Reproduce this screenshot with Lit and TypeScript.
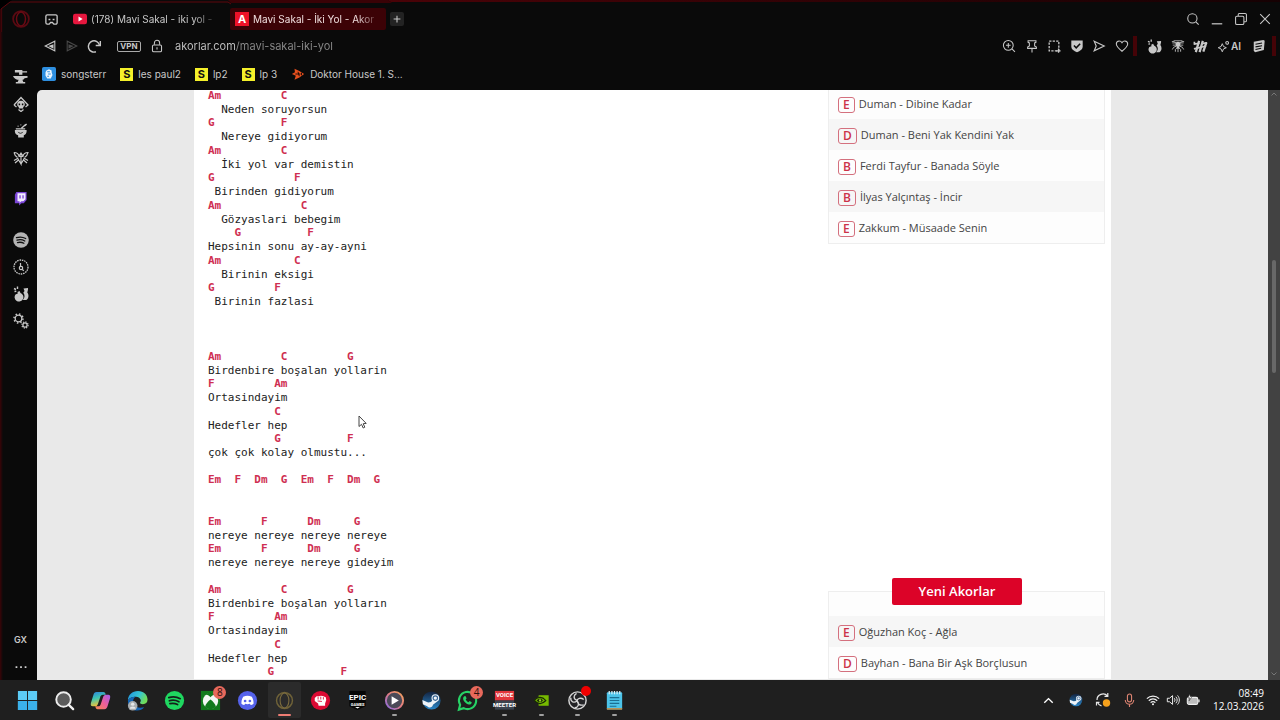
import { LitElement, html, css, svg, TemplateResult } from "lit";
import { customElement } from "lit/decorators.js";
import { classMap } from "lit/directives/class-map.js";

type Art = ReturnType<typeof svg>;

const draw = (size: number, art: Art, box = 16): TemplateResult => html`
  <svg width=${size} height=${size} viewBox="0 0 ${box} ${box}" fill="none" stroke="currentColor" stroke-width="1.2" aria-hidden="true">${art}</svg>
`;

/* ---------- browser chrome ---------- */
const opera = svg`<circle cx="8" cy="8" r="7" stroke="#5a0a12" stroke-width="1.6"/><ellipse cx="8" cy="8" rx="4" ry="6.2" stroke="#6a0a14" stroke-width="1.3"/>`;
const mask = svg`<path d="M3.500 3h9A1.500 1.500 0 0 1 14 4.500v7a1.500 1.500 0 0 1-1.500 1.500H10.500L9 11.200H7L5.500 13h-2A1.500 1.500 0 0 1 2 11.500v-7A1.500 1.500 0 0 1 3.500 3z" stroke-width="1.400"/><path d="M4.800 8h2M9.200 8h2" stroke-width="1.800"/>`;
const youtube = svg`<rect x="0" y="2" width="16" height="12" rx="2.500" fill="#e6173e" stroke="none"/><path d="M6.300 5.200v5.600L11 8z" fill="#fff" stroke="none"/>`;
const plus = svg`<path d="M8 3.500v9M3.500 8h9" stroke-width="1.400"/>`;
const magnifier = svg`<circle cx="7.300" cy="7.300" r="5.300"/><path d="M11.200 11.200l3.300 3.300"/>`;
const minimize = svg`<path d="M2 13.500h12" stroke-width="1.400"/>`;
const restore = svg`<rect x="1.800" y="4.800" width="9.500" height="9.500" rx="1.500"/><path d="M4.800 4.500V3a1.200 1.200 0 0 1 1.200-1.200h6.800A1.400 1.400 0 0 1 14.200 3.200V10a1.200 1.200 0 0 1-1.200 1.200h-1.500"/>`;
const close = svg`<path d="M2.500 2.500l11 11M13.500 2.500l-11 11"/>`;
const back = svg`<path d="M13.500 2.500v11L2.500 8z"/><path d="M12 6v5L6 8z" fill="currentColor" stroke="none"/>`;
const forward = svg`<path d="M2.500 2.500v11L13.500 8z"/><path d="M4 6v5l6-3z" fill="currentColor" stroke="none"/>`;
const reload = svg`<path d="M9.500 13.600A6 6 0 1 1 13.300 6.500" stroke-width="1.500"/><path d="M14.200 2v5H9.300" stroke-width="1.500"/>`;
const lock = svg`<rect x="2.800" y="6.800" width="10.400" height="7.700" rx="1.500"/><path d="M5 6.500V4.500a3 3 0 0 1 6 0v2M8 9.500v2.500"/>`;
const zoomIn = svg`<circle cx="7.200" cy="7.200" r="5.600"/><path d="M11.400 11.400l3.400 3.400M4.500 7.200h5.400M7.200 4.500v5.400"/>`;
const pin = svg`<path d="M3.500 2h9v1.800l-1.500.7v3.500l2 1.200v1.500H3V9.200L5 8V4.500l-1.500-.7zM8 11v4.500"/>`;
const snapshot = svg`<path d="M2.500 2.500h11v11h-11z" stroke-dasharray="2.600 1.400" stroke-width="1.500"/><path d="M10.500 13.500h5M13.200 10.800v5" stroke-width="1.500"/>`;
const shield = svg`<path d="M1.500 1.800h13v6.700c0 3.200-3 5-6.500 6.500C4.500 13.500 1.500 11.700 1.500 8.500z" fill="currentColor" stroke="none"/><path d="M4.500 7.500l2.600 2.600L11.600 5.500" stroke="#0a0a0a" stroke-width="1.700"/>`;
const send = svg`<path d="M2.500 2.500L14 8 2.500 13.500 4.800 8z" stroke-width="1.300"/>`;
const heart = svg`<path d="M8 14C4.500 11.200 1.500 8.800 1.500 5.800 1.500 3.700 3 2.300 4.800 2.300 6.200 2.300 7.300 3 8 4.300 8.700 3 9.800 2.300 11.200 2.300 13 2.300 14.500 3.700 14.500 5.800 14.500 8.800 11.500 11.200 8 14z"/>`;
const potion = svg`<path d="M4.500 6L6.500 5l1 2A4.400 4.400 0 1 1 2.500 8.500L4.800 7.600z" fill="currentColor" stroke="none"/><path d="M10.500 2.500l4.500-.5v1.500l-.7 3c1.800 2 1.600 6-1 7.500h-3.600c2.300-2.200 2.300-5 .6-7.200L11.500 5z" fill="currentColor" stroke="none"/><path d="M1 2.500l2 1M4.500.5v2.500M1.500 5.500l1.800-.3" stroke-width="1.400"/>`;
const spider = svg`<path d="M3 2h10M1.500 4.500h13M2 7h12" stroke-width=".9"/><ellipse cx="8" cy="6" rx="2.700" ry="3" fill="currentColor" stroke="none"/><circle cx="8" cy="9.800" r="1.600" fill="currentColor" stroke="none"/><path d="M6 5L3.500 3H1M10 5l2.500-2H15M6.300 8L3 9.500 1.500 12M9.700 8L13 9.500l1.500 2.500M7 10l-2 2v2.500M9 10l2 2v2.500M8 11v4" stroke-width="1"/>`;
const hashtag = svg`<path d="M6.500 2L3 14M10.500 2L7 14M14.300 3.500L11 13.500" stroke-width="2.400"/><path d="M1 5.500l6-1M1 10.500l13-3M9 5l6-.8M1.500 3v3" stroke-width="1.800"/>`;
const spark = svg`<path d="M6.500 4.500L8 8l3.500 1.500L8 11l-1.500 3.500L5 11 1.500 9.500 5 8z"/><circle cx="12.500" cy="3.500" r="1.700" stroke-width="1.300"/>`;
const scroll = svg`<path d="M2 3l11-2 1.500 1L13.500 12.500 3.500 15 2 13.500z" fill="currentColor" stroke="none"/><path d="M4 6l7.500-1.400M4 9l7.500-1.400M4 12l6.500-1.400" stroke="#0a0a0a" stroke-width="1.200"/>`;
const songsterrArt = svg`<rect width="16" height="16" rx="2" fill="#2e8fe0" stroke="none"/><path d="M5 4l3-1.500L11 4v2l1 3-2 4H6L4 10V6z" fill="#eaf5ff" stroke="none"/><path d="M6 5.500h3M7 8h3M6 10.500h2" stroke="#2e8fe0"/>`;
const doktorArt = svg`<path d="M4 2l5.500 2.500L15 8l-5.500 4L4 14.500 5.500 10 1 8l3.500-2z" fill="#e8501e" stroke="none"/><path d="M5 8h6M8 5.500l1.500 5M12 6.500v3" stroke="#1c0a06" stroke-width="1.100"/>`;
const dots = svg`<path d="M1.800 8h2M7 8h2M12.200 8h2" stroke="#d0d0d0" stroke-width="2"/>`;

/* ---------- side panel ---------- */
const anvil = svg`<path d="M2 1h8v1.500h5v1.200H10V6H6.500V3.700H2zM0 7.500h15.500v1.700c-2.500 0-4 1-4.500 2.300h-1l1 2.300h2v1.700h-10v-1.700h2l1-2.300H4.500C3 11 1 10 0 7.500z" fill="currentColor" stroke="none"/>`;
const skull = svg`<path d="M1 9L8 1.500 15 9l-2.500 2M1 9l2.500 2M5.500 13.500L8 15.500l2.500-2" stroke-width="1.300"/><path d="M4.200 8.500a3.800 3.800 0 1 1 7.600 0c0 1.300-.5 2-1.600 2.500V12.500H5.800v-1.500C4.700 10.500 4.200 9.800 4.200 8.500z" fill="currentColor" stroke="none"/><path d="M6.400 7.500v1.800M9.600 7.500v1.800" stroke="#0a0a0a" stroke-width="1.500"/>`;
const mortar = svg`<path d="M2 7.500h12.500v1.500c0 2-1.500 3.500-3 4v2.500h-6V13C3.500 12.500 2 11 2 9z" fill="currentColor" stroke="none"/><path d="M3 6.300h10M9 5.500l4.500-4M14.500 1l-2 2M5 3.500h.8M8 2h.8" stroke-width="1.500"/><path d="M5.500 9.500c1 2 4 2 5 0" stroke="#0a0a0a" stroke-width=".8"/>`;
const wings = svg`<path d="M1 2.500c3 0 4.500 1.500 5 3.500L8 3l2 3c.5-2 2-3.500 5-3.500-.5 2.500-1.500 4-3.500 5M1 2.500c.5 2.500 1.500 4 3.500 5M8 3v11L4.500 8M8 14l3.500-6M2 13l4-3.500M14 13l-4-3.500M1 10.500l3.500-2M15 10.500l-3.500-2M6 6.500h4" stroke-width="1.200"/>`;
const twitch = svg`<path d="M3.500 1h11v8.500L11.500 13H9l-2.500 2.500V13H2V4z" fill="#7a45d6" stroke="none"/><path d="M4.800 2.300h8.500v6.500L11 11H8.800L7 12.700V11H4.800z" fill="#f2ecff" stroke="none"/><path d="M7.500 4.500v3.500M10.700 4.500v3.500" stroke="#7a45d6" stroke-width="1.400"/>`;
const spotifyGray = svg`<circle cx="8" cy="8" r="7.800" fill="#b4b4b4" stroke="none"/><path d="M3.500 5.700c3-1 6.500-.7 9.200.8M4 8.200c2.600-.8 5.500-.5 7.800.8M4.500 10.600c2.200-.6 4.400-.4 6.400.7" stroke="#101010" stroke-width="1.300" stroke-linecap="round"/>`;
const dial = svg`<circle cx="8" cy="8" r="7" stroke-dasharray="1.600 .8" stroke-width="1.300"/><circle cx="8" cy="9" r="1.700"/><path d="M7.500 8V4M9.300 10.500l1.500 1.200"/>`;
const gears = svg`<circle cx="5.500" cy="5.500" r="3.300" stroke-width="1.300"/><circle cx="5.500" cy="5.500" r="4.500" stroke-dasharray="1.500 2.030" stroke-width="1.500"/><circle cx="12" cy="12" r="2.100" stroke-width="1.200"/><circle cx="12" cy="12" r="3.100" stroke-dasharray="1.200 1.234" stroke-width="1.200"/>`;

/* ---------- taskbar (24 unit box) ---------- */
const windows = svg`<path d="M2 2h9.500v9.500H2zM12.500 2H22v9.500h-9.500zM2 12.500h9.500V22H2zM12.500 12.500H22V22h-9.500z" fill="#5ccbf5" stroke="none"/><path d="M2 12.500h9.500V22H2zM12.500 12.500H22V22h-9.500z" fill="#3bb1ea" stroke="none"/>`;
const search = svg`<circle cx="11" cy="11" r="7.600" fill="#5c5c5c" stroke="#ededed" stroke-width="2"/><path d="M16.500 16.500l4.500 4.500" stroke="#f2f2f2" stroke-width="2.400" stroke-linecap="round"/>`;
const copilot = svg`<defs><linearGradient id="cp1" x1="0" y1="0" x2="0.300" y2="1"><stop stop-color="#2b7de0"/><stop offset=".5" stop-color="#3ec6b0"/><stop offset="1" stop-color="#f0c23a"/></linearGradient><linearGradient id="cp2" x1="1" y1="0" x2="0" y2="1"><stop stop-color="#a35df0"/><stop offset=".5" stop-color="#ee5f9a"/><stop offset="1" stop-color="#f58a4c"/></linearGradient></defs><path d="M8 3h7c1.500 0 2 1 2.500 3h-3c-1.500 0-2.500 1-3 3l-2 6c-.7 2-1.500 3-3.500 3H4c-2 0-2.500-1.500-2-3.500l2.500-8C5.200 4 6 3 8 3z" fill="url(#cp1)" stroke="none"/><path d="M16 21H9c-1.500 0-2-1-2.500-3h3c1.500 0 2.500-1 3-3l2-6c.7-2 1.500-3 3.500-3h2c2 0 2.500 1.500 2 3.500l-2.500 8c-.7 2.500-1.500 3.500-3.500 3.500z" fill="url(#cp2)" stroke="none"/>`;
const edge = svg`<defs><linearGradient id="ed" x1="0" y1="0" x2="1" y2=".4"><stop stop-color="#1f8fe0"/><stop offset=".6" stop-color="#36c6d2"/><stop offset="1" stop-color="#6fdc5a"/></linearGradient></defs><path d="M2 12C2 6 6.500 2 12.500 2S22.500 6 22.500 11c0 3-2 4.800-4.800 4.800-2 0-3.200-.7-3-1.800.8-1 .9-1.800.6-2.800C14.500 9 12.500 8 10.500 8 6.500 8 3 9.500 2 12z" fill="url(#ed)" stroke="none"/><path d="M2 12c1-2.500 4.500-4 8-4-2.500 1.500-3 4-2 7 1.200 3.500 5 5.500 11 4C16 23 10 23 6.500 21 3.500 19 2 16 2 12z" fill="#1665b5" stroke="none"/><circle cx="7" cy="17.500" r="5" fill="#a9adb0" stroke="none"/><path d="M4 20.500c0-3 6-3 6 0z" fill="#e4e6e8" stroke="none"/><circle cx="7" cy="15.800" r="1.800" fill="#e4e6e8" stroke="none"/>`;
const spotify = svg`<circle cx="12" cy="12" r="10" fill="#1fd760" stroke="none"/><path d="M6 9c4-1.200 8.500-.8 12 1.100M6.600 12.300c3.300-1 7-.6 10 1M7.200 15.300c2.800-.7 5.500-.4 8 .9" stroke="#14201a" stroke-width="1.800" stroke-linecap="round"/>`;
const xbox = svg`<rect x="2" y="2" width="20" height="20" fill="#127a1c" stroke="none"/><circle cx="12" cy="12.500" r="8" fill="#f3f7f3" stroke="none"/><path d="M7 6c2-.5 3.500 1 5 2.500C13.500 7 15 5.500 17 6c-1.500-1.500-3-2-5-2s-3.500.5-5 2zM12 11c-2.700 2-5.200 5-5.700 7.500 1.500 1.500 3.500 2.500 5.700 2.500s4.200-1 5.700-2.500C17.200 16 14.700 13 12 11z" fill="#127a1c" stroke="none"/>`;
const discord = svg`<circle cx="12" cy="12" r="10" fill="#5562ea" stroke="none"/><path d="M7.500 8c3-1.300 6-1.300 9 0 1.500 2.500 2 5 1.800 7.300-1 .8-2 1.200-3 1.400l-.8-1.200c-1.700.5-3.300.5-5 0l-.8 1.200c-1-.2-2-.6-3-1.400C5.500 13 6 10.500 7.500 8z" fill="#fff" stroke="none"/><circle cx="9.500" cy="12.500" r="1.400" fill="#5562ea" stroke="none"/><circle cx="14.500" cy="12.500" r="1.400" fill="#5562ea" stroke="none"/>`;
const operaGold = svg`<circle cx="12" cy="12" r="8.300" stroke="#6f6238" stroke-width="1.500"/><ellipse cx="12" cy="12" rx="4.600" ry="7.800" stroke="#7d6d3f" stroke-width="1.100"/>`;
const beats = svg`<circle cx="12" cy="12" r="10" fill="#dc0a34" stroke="none"/><path d="M6 9.500L8 7.500h2.500l2-.5 2.500.5 2.500 1 .5 3-1.200 3.500v2.500H10l-.5-2.500L6 12.500z" fill="#fff" stroke="none"/><path d="M9.500 8v3M12.300 8v3M15 8.500V11M9 12.500l4.500.5" stroke="#dc0a34" stroke-width=".9"/>`;
const epic = svg`<path d="M3.500 2h17v16L12 22 3.500 18z" fill="#060606" stroke="none"/><path d="M9.500 18.800h5L12 20.300z" fill="#fff" stroke="none"/>`;
const player = svg`<defs><linearGradient id="pl" x1="0" y1="1" x2="1" y2="0"><stop stop-color="#7f6be8"/><stop offset=".5" stop-color="#e07a86"/><stop offset="1" stop-color="#f2a45a"/></linearGradient></defs><circle cx="12" cy="12" r="9" fill="#4b4a58" stroke="url(#pl)" stroke-width="2"/><path d="M9 7.500v9l7.500-4.500z" fill="#fff" stroke="none"/>`;
const steam = svg`<defs><linearGradient id="st" x1="0" y1="0" x2="0" y2="1"><stop stop-color="#13233f"/><stop offset="1" stop-color="#2a86c8"/></linearGradient></defs><circle cx="12" cy="12" r="9.500" fill="url(#st)" stroke="none"/><path d="M2.500 11.500l6 2.500 3-.5 2.500-3 4 2.500-4.500 3.500c-.5 3-4 4-6 1.500L3 16z" fill="#eef3f8" stroke="none"/><circle cx="16" cy="9.500" r="4" fill="#eef3f8" stroke="none"/><circle cx="16" cy="9.500" r="2.300" fill="#eef3f8" stroke="#3a6796" stroke-width="1.200"/>`;
const whatsapp = svg`<path d="M3 21.500l1.300-5A9 9 0 1 1 8 20z" stroke="#27d366" stroke-width="2.200"/><path d="M8.500 7.500l1.700 0 .8 2.300-.9 1.200c.6 1.300 1.500 2.200 2.900 2.800l1.200-1.200 2.200 1.100c0 1.800-1.400 2.600-3 2.400-3-.5-5.600-3.200-6-5.900 0-1.200.4-2 1.100-2.700z" fill="#27d366" stroke="none"/>`;
const voicemeeter = svg`<rect x="2" y="2" width="20" height="10" fill="#e2363c" stroke="none"/><rect x="2" y="12" width="20" height="9.500" fill="#3b434e" stroke="none"/>`;
const nvidia = svg`<rect x="9" y="6.500" width="10.500" height="11" fill="#76b900" stroke="none"/><path d="M4.500 12c3-4 8-4.800 12 0-4 4.500-8.500 4-12 0z" fill="#76b900" stroke="#1a2a06" stroke-width="1.200"/><path d="M7 12c2-2.500 5-2.500 6.500 0-2 2.200-4.500 2.200-6.500 0z" fill="#1a2a06" stroke="none"/><circle cx="10.500" cy="12" r="1.200" fill="#9ad02a" stroke="none"/>`;
const obs = svg`<circle cx="12" cy="12" r="9" fill="#232326" stroke="#d6d6d6" stroke-width="1.500"/><path d="M11 4.500c-3.500 2-3.500 6 .5 7.500M18.500 11c-3-2.500-7-1-7 1.500M9 19.500c3.500 0 5.500-4 2.800-7M5 9c-.5 4.500 3.500 6 6.500 3.500M18.500 16.500c-4.500 1-6.500-1-6.700-4" stroke="#d6d6d6" stroke-width="1.400"/>`;
const notepad = svg`<rect x="4" y="3.500" width="16" height="18" rx="1" fill="#4cc3e8" stroke="none"/><path d="M4 20h16v1.500H4z" fill="#c98a3c" stroke="none"/><path d="M6.500 2v3.500M9.300 2v3.500M12 2v3.500M14.700 2v3.500M17.500 2v3.500" stroke="#d9f3fb" stroke-width="1.300"/><path d="M7 9h10M7 12h10M7 15h10M7 18h7" stroke="#1b6f92" stroke-width="1.200"/>`;

/* ---------- tray ---------- */
const chevron = svg`<path d="M3.500 10.500L8 6l4.500 4.500" stroke="#fff" stroke-width="1.500"/>`;
const sync = svg`<path d="M2 8a6 6 0 0 1 10.500-4M12.800 1v3.300H9.500M2.500 10.500a6 6 0 0 0 4 3.300M1.500 13.500v-3.200h3" stroke="#e8e8e8"/><circle cx="11.500" cy="11" r="3.700" fill="#f5a11c" stroke="none"/>`;
const mic = svg`<rect x="5.800" y="1" width="4.400" height="8.500" rx="2.200" stroke="#d98270"/><path d="M3.500 7.500a4.500 4.500 0 0 0 9 0M8 12v3" stroke="#d98270"/>`;
const wifi = svg`<path d="M1 6.500a10 10 0 0 1 14 0M3.200 8.800a6.800 6.800 0 0 1 9.600 0M5.300 11a3.800 3.800 0 0 1 5.400 0" stroke="#f0f0f0" stroke-width="1.400"/><circle cx="8" cy="12.800" r="1.200" fill="#f0f0f0" stroke="none"/>`;
const volume = svg`<path d="M1.500 6h2.500L7.500 3v10L4 10H1.500zM9.500 6c1 1.200 1 2.800 0 4M11.300 4.300c2 2.200 2 5.200 0 7.400M13.200 2.800c2.700 3 2.700 7.400 0 10.400" stroke="#f0f0f0" stroke-width="1.100"/>`;
const battery = svg`<rect x="1.500" y="5" width="12" height="8" rx="2" fill="#bdbdbd" stroke="#f0f0f0"/><path d="M14.800 7.500v3" stroke="#f0f0f0" stroke-width="1.500"/><path d="M4.500 1L2 5.500h2.500L3.500 9 7 4H4.800z" fill="#fff" stroke="#1f1f1f" stroke-width=".6"/>`;

const verses: { gap: number; couplets: [string, string][][] }[] = [
  {
    gap: 42,
    couplets: [
      [["Am         C", "  Neden soruyorsun"], ["G          F", "  Nereye gidiyorum"]],
      [["Am         C", "  İki yol var demistin"], ["G            F", " Birinden gidiyorum"]],
      [["Am            C", "  Gözyaslari bebegim"], ["    G          F", "Hepsinin sonu ay-ay-ayni"]],
      [["Am           C", "  Birinin eksigi"], ["G         F", " Birinin fazlasi"]],
    ],
  },
  {
    gap: 14,
    couplets: [
      [["Am         C         G", "Birdenbire boşalan yollarin"], ["F         Am", "Ortasindayim"]],
      [["          C", "Hedefler hep"], ["          G          F", "çok çok kolay olmustu..."]],
    ],
  },
  { gap: 28, couplets: [[["Em  F  Dm  G  Em  F  Dm  G", ""]]] },
  {
    gap: 14,
    couplets: [[["Em      F      Dm     G", "nereye nereye nereye nereye"], ["Em      F      Dm     G", "nereye nereye nereye gideyim"]]],
  },
  {
    gap: 0,
    couplets: [
      [["Am         C         G", "Birdenbire boşalan yolların"], ["F         Am", "Ortasindayim"]],
      [["          C", "Hedefler hep"], ["         G          F", ""]],
    ],
  },
];

const popular = [
  ["E", "Duman - Dibine Kadar"],
  ["D", "Duman - Beni Yak Kendini Yak"],
  ["B", "Ferdi Tayfur - Banada Söyle"],
  ["B", "İlyas Yalçıntaş - İncir"],
  ["E", "Zakkum - Müsaade Senin"],
];
const recent = [
  ["E", "Oğuzhan Koç - Ağla"],
  ["D", "Bayhan - Bana Bir Aşk Borçlusun"],
];

@customElement("song-page")
class SongPage extends LitElement {
  static styles = css`
    :host { display: block; flex: 1; min-width: 0; overflow: hidden; background: #e9e9e9; border-top-left-radius: 5px; }
    .sheet { display: flex; justify-content: space-between; max-width: 917px; min-height: 100%; margin: -2px auto 0; padding: 0 6px 0 14px; box-sizing: border-box; background: #fff; }
    .lyrics { padding-top: 1px; font: 11px "DejaVu Sans Mono", monospace; color: #222; }
    .verse { display: flex; flex-direction: column; gap: 1px; }
    .gap14 { margin-bottom: 14px; }
    .gap28 { margin-bottom: 28px; }
    .gap42 { margin-bottom: 42px; }
    .line { margin: 0; font: inherit; line-height: 13px; white-space: pre; }
    .chord { line-height: 14px; font-weight: 700; color: #cf2f52; }
    .side { width: 277px; flex: none; font: 11px "Open Sans", "Noto Sans", sans-serif; color: #444; }
    .card { border: 1px solid #eee; border-top: 0; background: #fdfdfd; }
    .framed { border-top: 1px solid #eee; }
    .slot { height: 334px; }
    .heading { display: block; width: 130px; margin: 0 0 -14px 64px; position: relative; border-radius: 2px; background: #dc0328; color: #fff; text-align: center; font-size: 13px; font-weight: 600; line-height: 27px; }
    .list { margin: 0; padding: 0; list-style: none; }
    .framed .list { padding-top: 24px; }
    .row { display: flex; align-items: center; height: 31px; padding-left: 9px; }
    .shade { background: #f6f6f6; }
    .song { display: flex; align-items: center; gap: 4px; color: inherit; text-decoration: none; }
    .key { border: 1px solid #d4707e; border-radius: 3px; padding: 0 4px; margin-top: 2px; font-size: 12px; line-height: 14px; font-weight: 600; color: #cc3348; }
  `;

  private songs(items: string[][], start: number) {
    return html`<ul class="list">
      ${items.map(
        ([key, name], i) => html`<li class=${classMap({ row: true, shade: (i + start) % 2 === 1 })}>
          <a class="song" href="#"><span class="key">${key}</span><span>${name}</span></a>
        </li>`
      )}
    </ul>`;
  }

  render() {
    return html`<main class="sheet">
      <article class="lyrics">
        ${verses.map(
          (v) => html`<section class="verse gap${v.gap}">
            ${v.couplets.map(
              (c) => html`<div>
                ${c.map(([chord, text]) => html`<pre class="line chord">${chord}</pre>${text ? html`<pre class="line">${text}</pre>` : ""}`)}
              </div>`
            )}
          </section>`
        )}
      </article>
      <aside class="side">
        <div class="card">${this.songs(popular, 0)}</div>
        <div class="slot"></div>
        <strong class="heading">Yeni Akorlar</strong>
        <div class="card framed">${this.songs(recent, 1)}</div>
      </aside>
    </main>`;
  }
}

@customElement("task-bar")
class TaskBar extends LitElement {
  static styles = css`
    :host { display: flex; justify-content: space-between; align-items: stretch; height: 40px; background: #1f1f1f; color: #fff; font: 10px "Open Sans", "Noto Sans", sans-serif; padding: 0 16px 0 9px; box-sizing: border-box; }
    button { all: unset; display: flex; align-items: center; justify-content: center; position: relative; }
    svg { display: block; }
    .apps { display: grid; grid-template-columns: repeat(17, 1fr); width: 624px; }
    .active { background: #2b2b2b; margin: 2px; border-radius: 2px; }
    .dot, .bar { position: absolute; bottom: 4px; height: 2px; width: 5px; border-radius: 1px; background: #a0a0a0; }
    .bar { bottom: 2px; width: 13px; background: #ee7d74; }
    .badge { position: absolute; top: 6px; right: 3px; width: 13px; height: 13px; border-radius: 50%; background: #e8695c; color: #2a0f0c; font-size: 10px; line-height: 13px; text-align: center; }
    .alert { background: #f00000; width: 10px; height: 10px; right: 5px; }
    .logo { position: absolute; font: 700 8px/8px "Roboto", sans-serif; text-align: center; color: #fff; }
    .small { display: block; font-size: 4px; line-height: 5px; }
    .meter { font-size: 6px; line-height: 10px; }
    .tray { display: flex; align-items: center; }
    .status { display: grid; grid-template-columns: repeat(4, 27px); }
    .quick { display: grid; grid-template-columns: repeat(3, 20px); margin: 0 10px 0 0; }
    .clock { display: block; text-align: right; line-height: 13px; }
    .clock span { display: block; }
  `;

  render() {
    const apps: { name: string; art: Art; mark?: string; badge?: string; label?: TemplateResult }[] = [
      { name: "Başlat", art: windows },
      { name: "Ara", art: search },
      { name: "Copilot", art: copilot },
      { name: "Edge", art: edge },
      { name: "Spotify", art: spotify },
      { name: "Xbox", art: xbox, badge: "8" },
      { name: "Discord", art: discord },
      { name: "Opera GX", art: operaGold, mark: "bar" },
      { name: "Beats", art: beats },
      { name: "Epic Games", art: epic, label: html`<span class="logo">EPIC<span class="small">GAMES</span></span>` },
      { name: "Media Player", art: player, mark: "dot" },
      { name: "Steam", art: steam },
      { name: "WhatsApp", art: whatsapp, badge: "4" },
      { name: "Voicemeeter", art: voicemeeter, mark: "dot", label: html`<span class="logo meter">VOICE<br />MEETER</span>` },
      { name: "NVIDIA", art: nvidia, mark: "dot" },
      { name: "OBS Studio", art: obs, mark: "dot", badge: "" },
      { name: "Not Defteri", art: notepad, mark: "dot" },
    ];
    return html`
      <div class="apps">
        ${apps.map(
          (a) => html`<button class=${classMap({ active: a.mark === "bar" })} aria-label=${a.name}>
            ${draw(23, a.art, 24)}${a.label ?? ""}
            ${a.badge !== undefined ? html`<span class=${classMap({ badge: true, alert: !a.badge })}>${a.badge}</span>` : ""}
            ${a.mark ? html`<span class=${a.mark}></span>` : ""}
          </button>`
        )}
      </div>
      <div class="tray">
        <div class="status">
          <button aria-label="Gizli simgeler">${draw(15, chevron)}</button>
          <button aria-label="Steam">${draw(16, steam, 24)}</button>
          <button aria-label="Eşitleme">${draw(16, sync)}</button>
          <button aria-label="Mikrofon">${draw(15, mic)}</button>
        </div>
        <div class="quick">
          <button aria-label="Ağ">${draw(14, wifi)}</button>
          <button aria-label="Ses">${draw(14, volume)}</button>
          <button aria-label="Pil">${draw(14, battery)}</button>
        </div>
        <button aria-label="Saat ve tarih"><span class="clock"><span>08:49</span><span>12.03.2026</span></span></button>
      </div>
    `;
  }
}

@customElement("app-root")
class AppRoot extends LitElement {
  static styles = css`
    :host { display: flex; flex-direction: column; height: 100vh; overflow: hidden; background: #0a0a0a; color: #c8c8c8; font: 10px "Inter", sans-serif; position: relative; }
    button { all: unset; display: flex; align-items: center; justify-content: center; }
    a { color: inherit; text-decoration: none; }
    svg { display: block; }
    .window { flex: 1; min-height: 0; display: grid; grid-template-columns: 37px 1fr; background: linear-gradient(90deg, #3a0408, #0a0a0a 3px); }
    .edge { position: absolute; inset: 0 0 auto 0; height: 32px; width: 100%; pointer-events: none; }
    .panel { display: flex; flex-direction: column; align-items: center; padding-left: 4px; }
    .home { height: 38px; margin-bottom: 25px; }
    .tool { height: 27px; }
    .spaced { margin-bottom: 14px; }
    .foot { margin-top: auto; height: 27px; font-size: 9px; font-weight: 600; }
    .main { display: flex; flex-direction: column; min-width: 0; min-height: 0; }
    .tabs { display: flex; align-items: center; height: 33px; padding: 5px 3px 0 4px; box-sizing: border-box; }
    .workspace { width: 20px; margin-right: 12px; }
    .tab { display: grid; grid-template-columns: 14px 1fr; gap: 4px; width: 146px; height: 22px; align-items: center; }
    .title { white-space: nowrap; mask-image: linear-gradient(90deg, #000 80%, transparent); }
    .current { width: 156px; margin-left: 11px; padding: 0 4px 0 5px; box-sizing: border-box; background: #3c0206; color: #f0dede; border-radius: 2px; }
    .fav { display: block; width: 14px; height: 14px; background: #ee1228; color: #fff; font-weight: 700; font-size: 11px; line-height: 14px; text-align: center; }
    .add { width: 14px; height: 14px; margin-left: 4px; background: #232323; border-radius: 2px; }
    .controls { display: grid; grid-template-columns: repeat(4, 24px); margin-left: auto; }
    .bar { display: flex; align-items: center; height: 26px; padding: 0 4px 0 2px; }
    .nav { display: grid; grid-template-columns: repeat(3, 22px); margin-right: 12px; }
    .off { color: #4a4a4a; }
    .vpn { width: 22px; border: 1px solid #aaa; border-radius: 2px; font-size: 8px; font-weight: 700; line-height: 9px; margin-right: 9px; }
    .address { display: flex; align-items: center; flex: 1; gap: 11px; }
    .url { all: unset; flex: 1; font: 11px "Inter", sans-serif; line-height: 16px; color: transparent; background: linear-gradient(90deg, #c4c4c4 60px, #8a8a8a 60px); background-clip: text; -webkit-background-clip: text; }
    .actions { display: grid; grid-template-columns: repeat(6, 1fr); width: 135px; }
    .rule { width: 4px; height: 20px; background: #450307; }
    .extras { display: grid; grid-template-columns: 23px 23px 22px 36px 24px; margin: 0 1px 0 6px; }
    .ai { font-weight: 600; gap: 1px; }
    .marks { display: flex; align-items: center; gap: 14px; height: 31px; padding: 0 5px 1px; box-sizing: border-box; }
    .mark { display: flex; align-items: center; gap: 5px; }
    .letter { width: 13px; height: 13px; background: #f4f02a; color: #111; font-weight: 700; font-size: 11px; line-height: 13px; text-align: center; }
    .view { flex: 1; min-height: 0; display: flex; }
    .track { width: 12px; background: #424242; display: flex; flex-direction: column; align-items: center; color: #777; }
    .thumb { width: 4px; height: 113px; margin-top: 160px; border-radius: 2px; background: #686868; }
    .arrow { height: 10px; }
    .down { margin-top: auto; }
    .pointer { position: absolute; left: 358px; top: 415px; }
  `;

  render() {
    const tools: [string, Art, boolean, number][] = [
      ["Araçlar", anvil, false, 15],
      ["Modlar", skull, false, 16],
      ["Laboratuvar", mortar, false, 15],
      ["Topluluk", wings, true, 16],
      ["Twitch", twitch, true, 15],
      ["Spotify", spotifyGray, false, 16],
      ["Geçmiş", dial, false, 16],
      ["Uzantılar", potion, false, 16],
      ["Ayarlar", gears, false, 16],
    ];
    const actions: [string, Art][] = [["Yakınlaştır", zoomIn], ["Sabitle", pin], ["Anlık görüntü", snapshot], ["Engelleyici", shield], ["Gönder", send], ["Favori", heart]];
    const marks: [string, TemplateResult][] = [
      ["songsterr", draw(14, songsterrArt)],
      ["les paul2", html`<span class="letter">S</span>`],
      ["lp2", html`<span class="letter">S</span>`],
      ["lp 3", html`<span class="letter">S</span>`],
      ["Doktor House 1. S...", draw(14, doktorArt)],
    ];
    return html`
      <div class="window">
        <aside class="panel">
          <button class="home" aria-label="Menü">${draw(18, opera)}</button>
          ${tools.map(([name, art, gap, size]) => html`<button class=${classMap({ tool: true, spaced: gap })} aria-label=${name}>${draw(size, art)}</button>`)}
          <button class="foot">GX</button>
          <button class="tool" aria-label="Daha fazla">${draw(14, dots)}</button>
        </aside>
        <div class="main">
          <div class="tabs">
            <button class="workspace" aria-label="Çalışma alanı">${draw(15, mask)}</button>
            <button class="tab">${draw(14, youtube)}<span class="title">(178) Mavi Sakal - iki yol -</span></button>
            <button class="tab current"><span class="fav">A</span><span class="title">Mavi Sakal - İki Yol - Akor</span></button>
            <button class="add" aria-label="Yeni sekme">${draw(12, plus)}</button>
            <div class="controls">
              <button aria-label="Sekmelerde ara">${draw(14, magnifier)}</button>
              <button aria-label="Simge durumu">${draw(14, minimize)}</button>
              <button aria-label="Önceki boyut">${draw(14, restore)}</button>
              <button aria-label="Kapat">${draw(14, close)}</button>
            </div>
          </div>
          <div class="bar">
            <div class="nav">
              <button aria-label="Geri">${draw(14, back)}</button>
              <button class="off" aria-label="İleri">${draw(14, forward)}</button>
              <button aria-label="Yenile">${draw(15, reload)}</button>
            </div>
            <button class="vpn">VPN</button>
            <label class="address">${draw(14, lock)}<input class="url" aria-label="Adres" value="akorlar.com/mavi-sakal-iki-yol" /></label>
            <div class="actions">${actions.map(([name, art]) => html`<button aria-label=${name}>${draw(14, art)}</button>`)}</div>
            <span class="rule"></span>
            <div class="extras">
              <button aria-label="İksir">${draw(15, potion)}</button>
              <button aria-label="Örümcek">${draw(14, spider)}</button>
              <button aria-label="Etiket">${draw(15, hashtag)}</button>
              <button class="ai">${draw(13, spark)}AI</button>
              <button aria-label="Liste">${draw(14, scroll)}</button>
            </div>
            <span class="rule"></span>
          </div>
          <nav class="marks">${marks.map(([name, icon]) => html`<a class="mark" href="#">${icon}<span>${name}</span></a>`)}</nav>
          <div class="view">
            <song-page></song-page>
            <div class="track">
              <span class="arrow">${draw(8, svg`<path d="M3 11l5-5 5 5" stroke-width="2"/>`)}</span>
              <span class="thumb"></span>
              <span class="arrow down">${draw(8, svg`<path d="M3 5l5 5 5-5" stroke-width="2"/>`)}</span>
            </div>
          </div>
        </div>
      </div>
      <task-bar></task-bar>
      <svg class="edge" fill="none" aria-hidden="true">
        <defs><linearGradient id="fade" gradientUnits="userSpaceOnUse" x1="388" x2="1280"><stop stop-color="#4a0207"/><stop offset="1" stop-color="#160103"/></linearGradient></defs>
        <path d="M0 0h12L1 9v23H0z" fill="#000" />
        <path d="M1 32V9L10 2H228L231 4" stroke="#5e060d" />
        <path d="M228 0h160l4 3H231z" fill="#3a0206" />
        <path d="M388 0H1280V2H391z" fill="url(#fade)" />
      </svg>
      <svg class="pointer" width="10" height="14" viewBox="0 0 10 14" aria-hidden="true"><path d="M1 1v10.500l2.500-2.200 1.700 3.700 1.600-.8L5.200 8.700l3-.3z" fill="#fff" stroke="#444" /></svg>
    `;
  }
}
